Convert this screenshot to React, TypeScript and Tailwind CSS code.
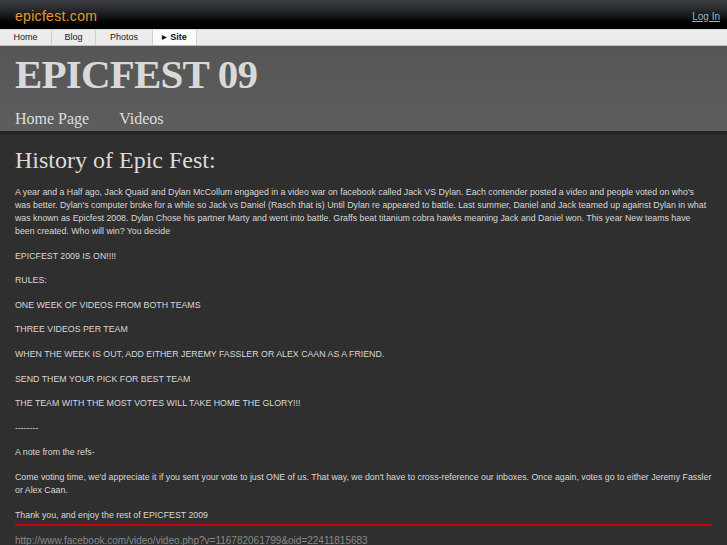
import React from "react";

const paras: string[] = [
  "EPICFEST 2009 IS ON!!!!",
  "RULES:",
  "ONE WEEK OF VIDEOS FROM BOTH TEAMS",
  "THREE VIDEOS PER TEAM",
  "WHEN THE WEEK IS OUT, ADD EITHER JEREMY FASSLER OR ALEX CAAN AS A FRIEND.",
  "SEND THEM YOUR PICK FOR BEST TEAM",
  "THE TEAM WITH THE MOST VOTES WILL TAKE HOME THE GLORY!!!",
  "--------",
  "A note from the refs-",
];

export default function App() {
  const sans = { fontFamily: '"Liberation Sans", Arial, sans-serif' };
  const serif = { fontFamily: '"Liberation Serif", "Times New Roman", serif' };
  return (
    <div className="w-[727px] h-[545px] overflow-hidden bg-[#2f2f2f]" style={sans}>
      {/* top bar */}
      <div className="h-[29px] flex items-center justify-between px-[15px] bg-gradient-to-b from-[#3f4245] via-[#1b1c1d] to-[#000]">
        <span className="text-[14px] text-[#e39a2f] tracking-[0.3px] leading-none mt-[2px]">epicfest.com</span>
        <span className="text-[10px] text-[#93b7db] underline leading-none mt-[4px] mr-[-8px]">Log In</span>
      </div>
      {/* tab bar */}
      <div className="h-[17px] flex bg-[#ececec] border-b border-[#bdbdbd] border-t border-t-[#dcdcdc]">
        <div className="w-[52px] flex items-center justify-center text-[9px] text-[#222] border-r border-[#cfcfcf]">Home</div>
        <div className="w-[44px] flex items-center justify-center text-[9px] text-[#222] border-r border-[#cfcfcf]">Blog</div>
        <div className="w-[57px] flex items-center justify-center text-[9px] text-[#222] border-r border-[#cfcfcf]">Photos</div>
        <div className="w-[44px] flex items-center justify-center text-[9px] font-bold text-[#111] bg-[#fbfbfb] border-r border-[#cfcfcf]">
          <span className="text-[6px] mr-[3px]">▶</span>Site
        </div>
      </div>
      {/* header band */}
      <div className="h-[88px] bg-gradient-to-b from-[#565656] to-[#5d5d5d] px-[15px] flex flex-col border-b-[3px] border-[#232323]">
        <div className="text-[41px] font-bold text-[#d9d9d9] leading-none mt-[8px] tracking-[-0.8px]" style={serif}>EPICFEST 09</div>
        <div className="flex gap-[30px] text-[16px] text-[#dedede] mt-[16px] leading-none" style={serif}>
          <span>Home Page</span>
          <span>Videos</span>
        </div>
      </div>
      {/* content */}
      <div className="pl-[15px] pt-[14px]">
        <h1 className="text-[24px] text-[#dcdcdc] leading-none" style={serif}>History of Epic Fest:</h1>
        <div className="mt-[14px] w-[712px] text-[8.8px] leading-[13px] text-[#d8d8d8] whitespace-nowrap">
          <p className="mb-[11.6px]">
            A year and a Half ago, Jack Quaid and Dylan McCollum engaged in a video war on facebook called Jack VS Dylan. Each contender posted a video and people voted on who's
            <br />
            was better. Dylan's computer broke for a while so Jack vs Daniel (Rasch that is) Until Dylan re appeared to battle. Last summer, Daniel and Jack teamed up against Dylan in what
            <br />
            was known as Epicfest 2008. Dylan Chose his partner Marty and went into battle. Graffs beat titanium cobra hawks meaning Jack and Daniel won. This year New teams have
            <br />
            been created. Who will win? You decide
          </p>
          {paras.map((p, i) => (
            <p key={i} className="mb-[11.6px]">{p}</p>
          ))}
          <p className="mb-[11.6px]">
            Come voting time, we'd appreciate it if you sent your vote to just ONE of us. That way, we don't have to cross-reference our inboxes. Once again, votes go to either Jeremy Fassler
            <br />
            or Alex Caan.
          </p>
          <p className="mb-[11.6px]">Thank you, and enjoy the rest of EPICFEST 2009</p>
        </div>
        <div className="h-[2px] w-[697px] bg-[#cc0000] -mt-[9px]" />
        <div className="mt-[10px] text-[10px] text-[#8a8a8a] leading-none">
          http://www.facebook.com/video/video.php?v=116782061799&amp;oid=22411815683
        </div>
      </div>
    </div>
  );
}
